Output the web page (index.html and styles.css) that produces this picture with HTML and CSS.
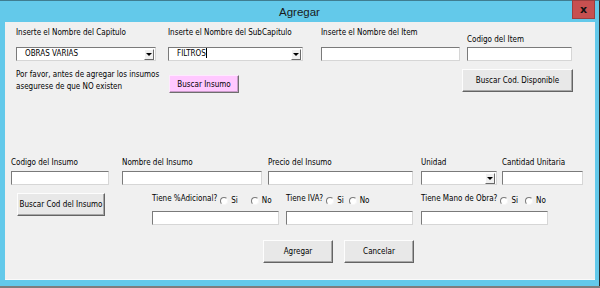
FILE: index.html
```html
<!DOCTYPE html>
<html lang="es">
<head>
<meta charset="UTF-8">
<title>Agregar</title>
<link rel="stylesheet" href="styles.css">
</head>
<body>

<div class="window">
<div class="titlebar">
<span class="title">Agregar</span>
<span class="close">x</span>
</div>

<div class="client">

<div class="row r1">
<div class="field f-cap">
<label>Inserte el Nombre del Capitulo</label>
<div class="combo"><span class="val">OBRAS VARIAS</span><span class="drop"></span></div>
</div>
<div class="field f-sub">
<label>Inserte el Nombre del SubCapitulo</label>
<div class="combo"><span class="val">FILTROS<i class="caret"></i></span><span class="drop"></span></div>
</div>
<div class="field f-item">
<label>Inserte el Nombre del Item</label>
<div class="txt"></div>
</div>
<div class="field f-cod">
<label class="low">Codigo del Item</label>
<div class="txt"></div>
</div>
</div>

<div class="row r2">
<p class="note">Por favor, antes de agregar los insumos<br>asegurese de que NO existen</p>
<div class="btn pink">Buscar Insumo</div>
<div class="btn disp">Buscar Cod. Disponible</div>
</div>

<div class="row r3">
<div class="field w-cod"><label>Codigo del Insumo</label><div class="txt"></div></div>
<div class="field w-nom"><label>Nombre del Insumo</label><div class="txt"></div></div>
<div class="field w-pre"><label>Precio del Insumo</label><div class="txt"></div></div>
<div class="field w-uni"><label>Unidad</label><div class="combo"><span class="val"></span><span class="drop"></span></div></div>
<div class="field w-can"><label>Cantidad Unitaria</label><div class="txt"></div></div>
</div>

<div class="row r4">
<div class="btn bcod">Buscar Cod del Insumo</div>
<div class="field rfield adic">
<div class="rlabel">Tiene %Adicional?<span class="opt"><i class="radio"></i>Si</span><span class="opt"><i class="radio"></i>No</span></div>
<div class="txt"></div>
</div>
<div class="field rfield iva">
<div class="rlabel">Tiene IVA?<span class="opt"><i class="radio"></i>Si</span><span class="opt"><i class="radio"></i>No</span></div>
<div class="txt"></div>
</div>
<div class="field rfield mano">
<div class="rlabel">Tiene Mano de Obra?<span class="opt"><i class="radio"></i>Si</span><span class="opt"><i class="radio"></i>No</span></div>
<div class="txt"></div>
</div>
</div>

<div class="row r5">
<div class="btn act">Agregar</div>
<div class="btn act">Cancelar</div>
</div>

</div>
</div>

</body>
</html>
```
FILE: styles.css
```css
body{
margin:0;
background:#7d7d7d;
}

.window{
width:599px;
height:285px;
background:#63c9ea;
border-top:1px solid #3f7d91;
border-right:1px solid #2f2f2f;
position:relative;
}

.titlebar{
height:21px;
display:flex;
justify-content:center;
align-items:center;
}

.title{
font:11.5px "Liberation Sans", sans-serif;
color:#1a1a1a;
}

/* close box sits over the title bar */
.close{
position:absolute;
top:-1px; right:4px;
width:23px; height:19px;
background:#c75050;
border:1px solid #9c3f3f;
box-sizing:border-box;
font:bold 11px "DejaVu Sans", sans-serif;
color:#111;
display:flex;
justify-content:center;
align-items:center;
}

.client{
margin-left:5px;
width:590px;
height:257px;
background:#f0f0f0;
border-bottom:1px solid #fafafa;
font:8px "DejaVu Sans Condensed", "DejaVu Sans", sans-serif;
color:#000;
}

.row{display:flex;}

.field{
display:flex;
flex-direction:column;
}

label{
display:block;
line-height:12px;
height:12px;
white-space:nowrap;
}

.txt, .combo{
height:14px;
box-sizing:border-box;
background:#fff;
border:1px solid;
border-color:#7a7a7a #d6d6d6 #d6d6d6 #7a7a7a;
}

.combo{
display:flex;
align-items:center;
justify-content:space-between;
}
.combo .val{
padding-left:8px;
line-height:12px;
white-space:nowrap;
}
.caret{
display:inline-block;
width:1px; height:10px;
background:#000;
vertical-align:-2px;
}
.drop{
width:10px; height:11px;
margin-right:1px;
box-sizing:border-box;
background:#f0f0f0;
border:1px solid;
border-color:#fff #6a6a6a #6a6a6a #fff;
display:flex;
justify-content:center;
align-items:center;
}
.drop::after{
content:"";
border-left:3px solid transparent;
border-right:3px solid transparent;
border-top:3px solid #000;
}

/* top block */
.r1{
padding-top:5px;
padding-left:11px;
align-items:flex-end;
}
.r1 label{margin-bottom:8px;}
.r1 label.low{margin-bottom:1px;}
.f-cap{width:140px; margin-right:12px;}
.f-sub{width:135px; margin-right:18px;}
.f-item{width:139px; margin-right:7px;}
.f-cod{width:105px;}

.btn{
box-sizing:border-box;
background:#e8e8e8;
border:1px solid;
border-color:#fdfdfd #646464 #646464 #fdfdfd;
box-shadow:inset -1px -1px #a8a8a8;
display:flex;
justify-content:center;
align-items:center;
white-space:nowrap;
}

.r2{
margin-top:8px;
padding-left:11px;
align-items:flex-start;
}
.note{
margin:0;
width:153px;
flex:none;
line-height:12px;
white-space:nowrap;
}
.pink{
margin-top:6px;
width:70px; height:18px;
background:#ffc8ff;
border-color:#ffe8ff #6e6e6e #6e6e6e #ffe8ff;
box-shadow:inset -1px -1px #c79bc7;
}
.disp{
margin-left:223px;
width:111px; height:23px;
}

/* insumo block */
.r3{
margin-top:64px;
padding-left:6px;
}
.r3 label{margin-bottom:2px;}
.w-cod{width:98px; margin-right:13px;}
.w-nom{width:140px; margin-right:6px;}
.w-pre{width:145px; margin-right:8px;}
.w-uni{width:76px; margin-right:5px;}
.w-can{width:81px;}

.r4{
margin-top:8px;
padding-left:12px;
}
.bcod{
width:88px; height:23px;
}
.rfield{width:127px;}
.adic{margin-left:47px;}
.iva{margin-left:7px;}
.mano{margin-left:8px;}
.rlabel{
height:12px;
line-height:12px;
margin-bottom:6px;
display:flex;
white-space:nowrap;
}
.opt{
display:flex;
align-items:center;
margin-top:3px;
margin-left:3px;
}
.adic .opt + .opt{margin-left:13px;}
.iva .opt + .opt{margin-left:5px;}
.mano .opt + .opt{margin-left:7px;}
.radio{
width:8px; height:8px;
box-sizing:border-box;
border-radius:50%;
border:1px solid;
border-color:#7a7a7a #f6f6f6 #f6f6f6 #7a7a7a;
background:#fff;
margin-right:3px;
}

.r5{
margin-top:15px;
padding-left:258px;
gap:11px;
}
.act{
width:70px; height:23px;
}
```
